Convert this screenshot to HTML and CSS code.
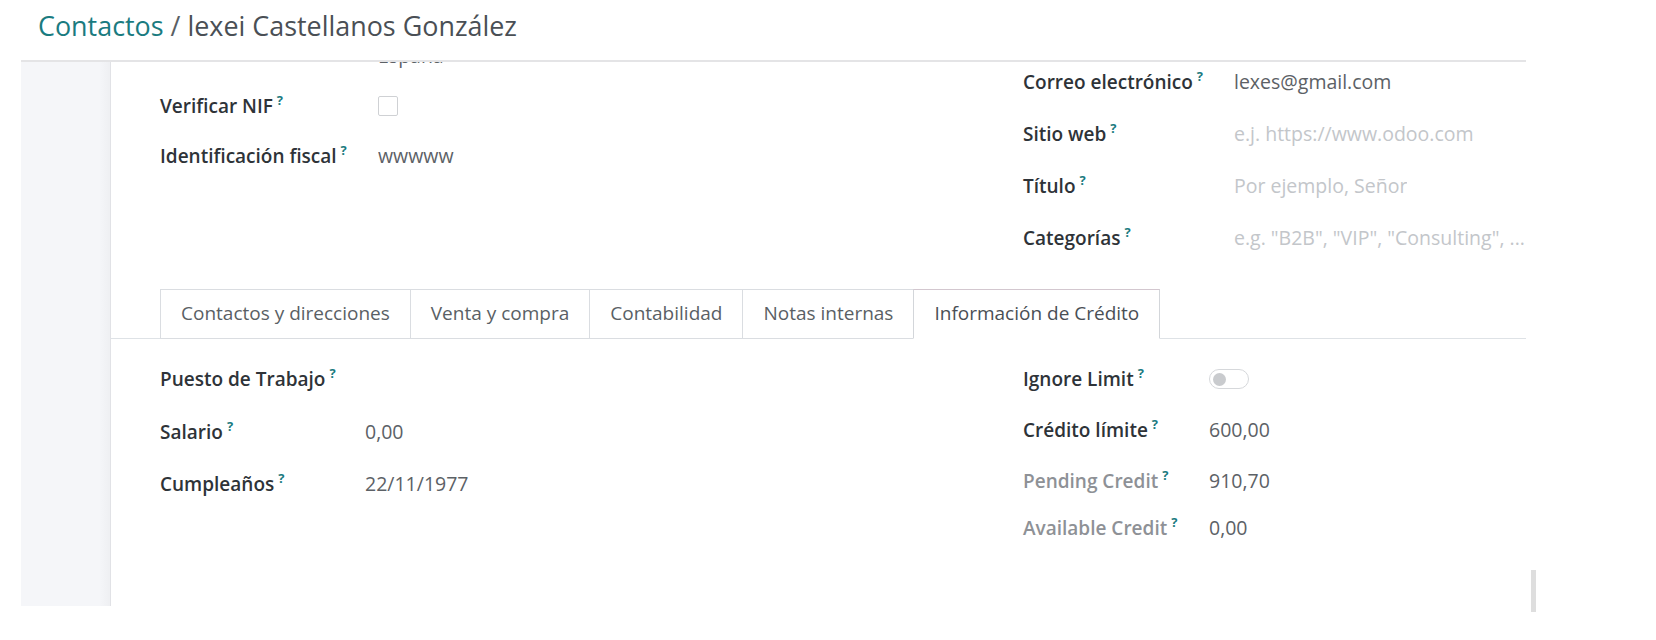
FILE: index.html
```html
<!DOCTYPE html>
<html lang="es">
<head>
<meta charset="utf-8">
<title>Contactos</title>
<link rel="stylesheet" href="styles.css">
</head>
<body>
<header class="header">
  <div class="breadcrumb"><span class="crumb-link">Contactos</span> <span class="crumb-sep">/</span> <span class="crumb-current">lexei Castellanos González</span></div>
</header>
<div class="frame">
  <aside class="sidebar"></aside>
  <main class="sheet">
    <div class="sheet-inner">
      <section class="group group-top">
        <div class="col col-left">
          <div class="row row-50"><div class="label"></div><div class="value">España</div></div>
          <div class="row row-50"><div class="label">Verificar NIF<sup class="tip">?</sup></div><div class="value"><span class="checkbox"></span></div></div>
          <div class="row row-50"><div class="label">Identificación fiscal<sup class="tip">?</sup></div><div class="value">wwwww</div></div>
        </div>
        <div class="col col-right">
          <div class="row row-52"><div class="label">Correo electrónico<sup class="tip">?</sup></div><div class="value">lexes@gmail.com</div></div>
          <div class="row row-52"><div class="label">Sitio web<sup class="tip">?</sup></div><div class="value placeholder">e.j. https://www.odoo.com</div></div>
          <div class="row row-52"><div class="label">Título<sup class="tip">?</sup></div><div class="value placeholder">Por ejemplo, Señor</div></div>
          <div class="row row-52"><div class="label">Categorías<sup class="tip">?</sup></div><div class="value placeholder">e.g. "B2B", "VIP", "Consulting", ...</div></div>
        </div>
      </section>

      <nav class="tabs">
        <span class="tab">Contactos y direcciones</span>
        <span class="tab">Venta y compra</span>
        <span class="tab">Contabilidad</span>
        <span class="tab">Notas internas</span>
        <span class="tab tab-active">Información de Crédito</span>
      </nav>

      <section class="group group-bottom">
        <div class="col col-left2">
          <div class="row row-53"><div class="label">Puesto de Trabajo<sup class="tip">?</sup></div><div class="value"></div></div>
          <div class="row row-53"><div class="label">Salario<sup class="tip">?</sup></div><div class="value">0,00</div></div>
          <div class="row row-52"><div class="label">Cumpleaños<sup class="tip">?</sup></div><div class="value">22/11/1977</div></div>
        </div>
        <div class="col col-right2">
          <div class="row row-50"><div class="label">Ignore Limit<sup class="tip">?</sup></div><div class="value"><span class="toggle"><span class="knob"></span></span></div></div>
          <div class="row row-51"><div class="label">Crédito límite<sup class="tip">?</sup></div><div class="value">600,00</div></div>
          <div class="row row-51"><div class="label muted">Pending Credit<sup class="tip">?</sup></div><div class="value">910,70</div></div>
          <div class="row row-44"><div class="label muted">Available Credit<sup class="tip">?</sup></div><div class="value">0,00</div></div>
        </div>
      </section>
    </div>
  </main>
</div>
<div class="scroll-thumb"></div>
</body>
</html>
```
FILE: styles.css
```css
html, body {
  margin: 0;
  padding: 0;
  background: #ffffff;
}
body {
  font-family: "Open Sans", "Noto Sans", sans-serif;
  color: #495057;
  position: relative;
  width: 1656px;
  height: 640px;
  overflow: hidden;
}

.header {
  height: 60px;
  box-sizing: border-box;
  padding: 7px 0 0 38px;
}
.breadcrumb {
  font-size: 26.9px;
  line-height: 38px;
  white-space: nowrap;
}
.crumb-link { color: #1a7b80; }
.crumb-sep { color: #5a5f64; }
.crumb-current { color: #4a4f55; }

.frame {
  margin-left: 21px;
  width: 1505px;
  height: 546px;
  box-sizing: border-box;
  border-top: 2px solid #e4e4e6;
  display: flex;
}
.sidebar {
  width: 89px;
  flex: none;
  background: linear-gradient(to right, #f5f6f9 0, #f5f6f9 78px, #eff0f3 88px);
  border-right: 1px solid #e1e2e6;
}
.sheet {
  flex: 1;
  overflow: hidden;
  background: #ffffff;
}
.sheet-inner {
  margin-top: -31px;
}

.group {
  display: grid;
  padding-left: 49px;
}
.group-top {
  grid-template-columns: 863px 503px;
}
.group-bottom {
  grid-template-columns: 863px 503px;
  padding-top: 13px;
}
.col-right { padding-top: 25px; }
.col-right2 { padding-top: 2px; }

.row {
  display: flex;
  align-items: center;
  white-space: nowrap;
}
.row-44 { height: 44px; }
.row-50 { height: 50px; }
.row-51 { height: 51px; }
.row-52 { height: 52px; }
.row-53 { height: 53px; }

.label {
  flex: none;
  font-size: 19px;
  font-weight: 600;
  color: #2e3338;
  line-height: 26px;
}
.col-left .label { width: 218px; }
.col-right .label { width: 211px; }
.col-left2 .label { width: 205px; }
.col-right2 .label { width: 186px; }
.label.muted { color: #8e9196; }

.tip {
  font-size: 13px;
  font-weight: 700;
  color: #1a7b80;
  margin-left: 4px;
  line-height: 0;
  vertical-align: 8px;
}

.value {
  font-size: 19.5px;
  color: #5c6166;
  line-height: 26px;
  overflow: hidden;
  min-width: 0;
}
.value.placeholder { color: #c3c6ca; }

.checkbox {
  display: block;
  width: 20px;
  height: 20px;
  box-sizing: border-box;
  border: 1px solid #cfd1d4;
  border-radius: 2px;
  background: #fff;
}

.toggle {
  display: flex;
  align-items: center;
  width: 40px;
  height: 20px;
  box-sizing: border-box;
  border: 1px solid #d6d8db;
  border-radius: 10px;
  padding-left: 3px;
  background: #fff;
}
.knob {
  width: 13px;
  height: 13px;
  border-radius: 50%;
  background: #c9cbce;
}

.tabs {
  display: flex;
  margin-top: 25px;
  padding-left: 49px;
  height: 49px;
  border-bottom: 1px solid #dee2e6;
}
.tab {
  height: 50px;
  box-sizing: border-box;
  display: flex;
  align-items: center;
  padding: 0 20px 2px;
  font-size: 19px;
  color: #5a5f65;
  background: #fff;
  border: 1px solid #dadde1;
  margin-right: -1px;
  white-space: nowrap;
}
.tab-active {
  border-color: #d3c7cf #d3d6da #ffffff #d3d6da;
  color: #4a4f55;
  position: relative;
  z-index: 1;
}

.scroll-thumb {
  position: absolute;
  left: 1531px;
  top: 570px;
  width: 5px;
  height: 42px;
  background: #dedede;
}
```
